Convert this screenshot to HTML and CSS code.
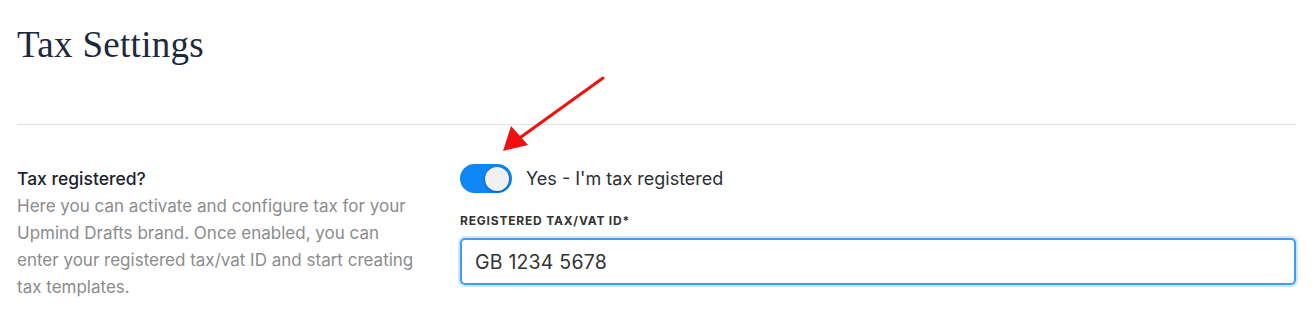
FILE: index.html
```html
<!DOCTYPE html>
<html>
<head>
<meta charset="utf-8">
<link rel="stylesheet" href="styles.css">
</head>
<body>
<div class="page">
  <h1 class="title">Tax Settings</h1>
  <hr class="divider">
  <div class="row">
    <div class="info">
      <div class="info-title">Tax registered?</div>
      <p class="info-desc">Here you can activate and configure tax for your Upmind Drafts brand. Once enabled, you can enter your registered tax/vat ID and start creating tax templates.</p>
    </div>
    <div class="fields">
      <label class="switch-row">
        <span class="switch"><span class="knob"></span></span>
        <span class="switch-label">Yes - I'm tax registered</span>
      </label>
      <div class="field-label">REGISTERED TAX/VAT ID*</div>
      <div class="input">GB 1234 5678</div>
    </div>
  </div>
  <svg class="arrow" width="120" height="90" viewBox="0 0 120 90">
    <line x1="106" y1="3" x2="24" y2="62" stroke="#f01010" stroke-width="3" stroke-linecap="round"/>
    <polygon points="6,76 14,51 31,70" fill="#f01010"/>
  </svg>
</div>
</body>
</html>
```
FILE: styles.css
```css
* { box-sizing: border-box; }
body {
  margin: 0;
  background: #fff;
  font-family: Inter, "Noto Sans", sans-serif;
}
.page {
  position: relative;
  padding: 0 18px 0 17px;
}
.title {
  margin: 0;
  padding-top: 24px;
  height: 124px;
  font-family: "Liberation Serif", serif;
  font-weight: 400;
  font-size: 37px;
  line-height: 42px;
  color: #1b2a3d;
  letter-spacing: 0.3px;
}
.divider {
  margin: 0;
  border: 0;
  border-top: 1px solid #e3e3e3;
}
.row {
  display: flex;
  padding-top: 39px;
}
.info {
  width: 443px;
  flex: none;
  padding-top: 5px;
}
.info-title {
  font-size: 17.5px;
  line-height: 20px;
  color: #1c2430;
  font-weight: 500;
}
.info-desc {
  margin: 4px 0 0;
  font-size: 17px;
  line-height: 27px;
  color: #8c8c8c;
  width: 405px;
}
.fields {
  flex: 1;
}
.switch-row {
  display: flex;
  align-items: center;
  gap: 14px;
}
.switch {
  width: 52px;
  height: 29px;
  border-radius: 15px;
  background: #0d87f5;
  display: flex;
  align-items: center;
  justify-content: flex-end;
  padding-right: 3px;
}
.knob {
  width: 24px;
  height: 24px;
  border-radius: 50%;
  background: #f1f1f3;
  box-shadow: 0 1px 3px rgba(0,0,0,0.35);
}
.switch-label {
  font-size: 18px;
  color: #2b2f36;
}
.field-label {
  margin-top: 20px;
  font-size: 12px;
  font-weight: 700;
  letter-spacing: 0.8px;
  color: #333;
  line-height: 16px;
}
.input {
  margin-top: 9px;
  height: 47px;
  border: 2px solid #3d9dfb;
  border-radius: 5px;
  box-shadow: 0 0 0 2px rgba(61,157,251,0.25);
  padding: 0 13px;
  display: flex;
  align-items: center;
  font-size: 19.5px;
  color: #333;
  letter-spacing: 0.2px;
}
.arrow {
  position: absolute;
  left: 497px;
  top: 75px;
}
```
